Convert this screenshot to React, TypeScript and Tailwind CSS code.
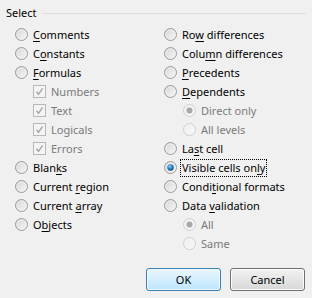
import React from 'react';

type RadioState = 'off' | 'on' | 'disabled' | 'disabledOn';

const Radio: React.FC<{ state: RadioState }> = ({ state }) => {
  const disabled = state === 'disabled' || state === 'disabledOn';
  return (
    <svg width="13" height="13" viewBox="0 0 13 13" className="shrink-0">
      <defs>
        <linearGradient id="rfill" x1="0" y1="0" x2="1" y2="1">
          <stop offset="0" stopColor="#d2d2d2" />
          <stop offset="1" stopColor="#fbfbfb" />
        </linearGradient>
        <linearGradient id="rfillD" x1="0" y1="0" x2="1" y2="1">
          <stop offset="0" stopColor="#ececec" />
          <stop offset="1" stopColor="#fafafa" />
        </linearGradient>
        <radialGradient id="rdot" cx="0.4" cy="0.35" r="0.7">
          <stop offset="0" stopColor="#8fd0f6" />
          <stop offset="0.5" stopColor="#2a86c8" />
          <stop offset="1" stopColor="#0d3f73" />
        </radialGradient>
      </defs>
      <circle cx="6.5" cy="6.5" r="6" fill={disabled ? 'url(#rfillD)' : 'url(#rfill)'} stroke={disabled ? '#cfcfcf' : '#9a9a9a'} strokeWidth="1" />
      <circle cx="6.5" cy="6.5" r="4.5" fill="none" stroke={disabled ? '#f4f4f4' : '#eeeeee'} strokeWidth="1" />
      {state === 'on' && <circle cx="6.5" cy="6.5" r="3.2" fill="url(#rdot)" />}
      {state === 'disabledOn' && <circle cx="6.5" cy="6.5" r="3" fill="#a8a8a8" />}
    </svg>
  );
};

const Check: React.FC = () => (
  <svg width="13" height="13" viewBox="0 0 13 13" className="shrink-0">
    <rect x="0.5" y="0.5" width="12" height="12" fill="#f4f4f4" stroke="#b8b8b8" />
    <path d="M3.5 6.8 L5.5 9.3 L9.6 3.4" fill="none" stroke="#a6a6a6" strokeWidth="1.4" />
  </svg>
);

const Label: React.FC<{ text: string; u?: number; disabled?: boolean }> = ({ text, u, disabled }) => (
  <span className={disabled ? 'text-[#7a7a7a]' : 'text-black'}>
    {u === undefined ? (
      text
    ) : (
      <>
        {text.slice(0, u)}
        <span className="underline underline-offset-2">{text[u]}</span>
        {text.slice(u + 1)}
      </>
    )}
  </span>
);

const RadioRow: React.FC<{ text: string; u?: number; state?: RadioState; indent?: boolean; focus?: boolean }> = ({
  text,
  u,
  state = 'off',
  indent,
  focus,
}) => (
  <div className={`h-[19px] flex items-center gap-[5px] ${indent ? 'pl-[19px]' : ''}`}>
    <Radio state={state} />
    {focus ? (
      <span className="outline outline-1 outline-dotted outline-black px-[1px] -ml-[1px] leading-[16px]">
        <Label text={text} u={u} />
      </span>
    ) : (
      <Label text={text} u={u} disabled={state === 'disabled' || state === 'disabledOn'} />
    )}
  </div>
);

const CheckRow: React.FC<{ text: string }> = ({ text }) => (
  <div className="h-[19px] flex items-center gap-[5px] pl-[18px]">
    <Check />
    <Label text={text} disabled />
  </div>
);

export default function App() {
  return (
    <div
      className="w-[312px] h-[298px] bg-[#f0f0f0] relative text-[11px] leading-none overflow-hidden"
      style={{ fontFamily: '"Segoe UI", "Noto Sans", "Open Sans", sans-serif' }}
    >
      <div className="flex items-center pt-[5px] pl-[6px] pr-[6px] h-[19px]">
        <span className="text-black">Select</span>
        <div className="flex-1 h-px bg-[#d5dfe5] ml-[5px] mt-[2px]" />
      </div>

      <div className="grid grid-cols-[149px_1fr] pl-[15px] pt-[6px]">
        <div className="flex flex-col">
          <RadioRow text="Comments" u={0} />
          <RadioRow text="Constants" u={1} />
          <RadioRow text="Formulas" u={0} />
          <CheckRow text="Numbers" />
          <CheckRow text="Text" />
          <CheckRow text="Logicals" />
          <CheckRow text="Errors" />
          <RadioRow text="Blanks" u={4} />
          <RadioRow text="Current region" u={8} />
          <RadioRow text="Current array" u={8} />
          <RadioRow text="Objects" u={1} />
        </div>
        <div className="flex flex-col">
          <RadioRow text="Row differences" u={2} />
          <RadioRow text="Column differences" u={4} />
          <RadioRow text="Precedents" u={0} />
          <RadioRow text="Dependents" u={0} />
          <RadioRow text="Direct only" state="disabledOn" indent />
          <RadioRow text="All levels" state="disabled" indent />
          <RadioRow text="Last cell" u={2} />
          <RadioRow text="Visible cells only" u={16} state="on" focus />
          <RadioRow text="Conditional formats" u={5} />
          <RadioRow text="Data validation" u={5} />
          <RadioRow text="All" state="disabledOn" indent />
          <RadioRow text="Same" state="disabled" indent />
        </div>
      </div>

      <div className="flex justify-end gap-[9px] pr-[7px] mt-[15px]">
        <button className="w-[75px] h-[23px] rounded-[3px] border border-[#3c7fb1] bg-gradient-to-b from-[#eaf6fd] to-[#bee6fd] text-black shadow-[inset_0_0_0_1px_#f0f9ff]">
          OK
        </button>
        <button className="w-[75px] h-[23px] rounded-[3px] border border-[#707070] bg-gradient-to-b from-[#f2f2f2] to-[#d8d8d8] text-black shadow-[inset_0_0_0_1px_#fcfcfc]">
          Cancel
        </button>
      </div>
    </div>
  );
}
